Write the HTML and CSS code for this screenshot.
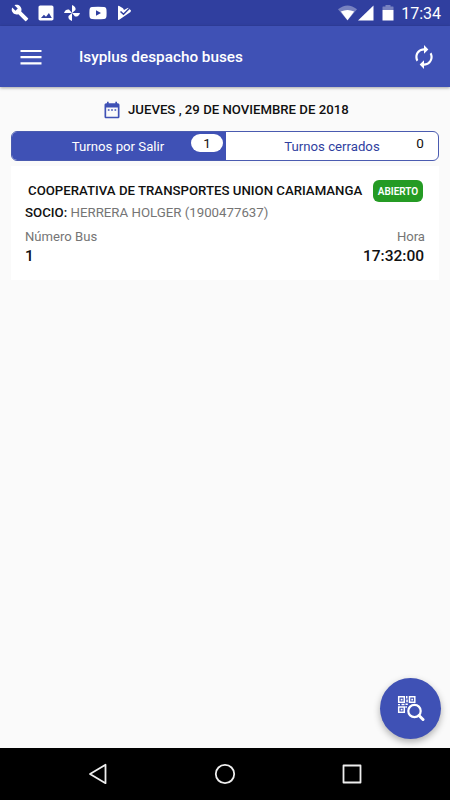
FILE: index.html
```
<!DOCTYPE html>
<html lang="es">

<head>
    <meta charset="UTF-8">
    <title>Isyplus despacho buses</title>
    <link rel="stylesheet" href="styles.css">
</head>

<body>

    <div class="status-bar">
        <div class="status-left">
            <svg width="18" height="18" viewBox="0 0 24 24"><path d="M22.7 19l-9.1-9.1c.9-2.3.4-5-1.5-6.9-2-2-5-2.4-7.4-1.3L9 6 6 9 1.6 4.7C.4 7.1.9 10.1 2.9 12.1c1.9 1.9 4.6 2.4 6.9 1.5l9.1 9.1c.4.4 1 .4 1.4 0l2.3-2.3c.5-.4.5-1.1.1-1.4z"/></svg>
            <svg width="20" height="20" viewBox="0 0 24 24"><path d="M21 19V5c0-1.100-.9-2-2-2H5c-1.100 0-2 .9-2 2v14c0 1.100.9 2 2 2h14c1.100 0 2-.9 2-2zM6 18l3.500-4 2.500 2.500 3.500-4.500 3.500 6z"/></svg>
            <svg width="16" height="16" viewBox="0 0 16 16"><path d="M8 8V0c3 1 4 3 3.500 5zM8 8h8c-1 3-3 4-5 3.500zM8 8v8c-3-1-4-3-3.500-5zM8 8H0c1-3 3-4 5-3.500z"/></svg>
            <svg width="18" height="14" viewBox="0 0 18 14"><path d="M3 1Q9 .4 15 1 17.300 1 17.500 4 17.700 7 17.500 10 17.300 13 15 13 9 13.600 3 13 .7 13 .5 10 .3 7 .5 4 .7 1 3 1zM7 4.300v5.400L12 7z" fill-rule="evenodd"/></svg>
            <svg width="15" height="16" viewBox="0 0 15 16"><path d="M1 1.500Q1 .3 2.200 1L6 3.200 7 5 11.200 2.700 14 5.500 13.500 7 2.200 14.800Q1 15.500 1 14.300z"/><path class="check" d="M3.500 6.500L6.500 9.300 12.500 3.300"/></svg>
        </div>
        <div class="status-right">
            <svg width="19" height="16" viewBox="0 0 20 16"><path class="dim" d="M0 4Q10-4 20 4L10 16z"/><path d="M3 6.500Q10 3 17 6.500L10 15.500z"/></svg>
            <svg width="16" height="16" viewBox="0 0 16 16"><path d="M15.500.5v15H0z"/></svg>
            <svg class="battery" width="12" height="16" viewBox="0 0 12 16"><path class="dim" d="M3.500 0h5v1.500H11Q11.500 1.500 11.500 2v3H.5V2Q.5 1.500 1 1.500h2.500z"/><path d="M.5 5h11v10.500H.5z"/></svg>
            <span class="clock">17:34</span>
        </div>
    </div>

    <header class="app-bar">
        <svg class="menu" width="22" height="16" viewBox="0 0 22 16"><path d="M.5 2h21M.5 8.200h21M.5 14.400h21"/></svg>
        <h1>Isyplus despacho buses</h1>
        <svg class="refresh" width="26" height="26" viewBox="0 0 24 24"><path d="M12 6v3l4-4-4-4v3c-4.420 0-8 3.580-8 8 0 1.570.46 3.030 1.240 4.260L6.700 14.800c-.45-.83-.7-1.790-.7-2.800 0-3.310 2.690-6 6-6zm6.760 1.740L17.300 9.200c.44.84.7 1.790.7 2.800 0 3.310-2.690 6-6 6v-3l-4 4 4 4v-3c4.420 0 8-3.580 8-8 0-1.570-.46-3.030-1.240-4.260z"/></svg>
    </header>

    <main class="content">
        <div class="date-row">
            <svg width="20" height="20" viewBox="0 0 24 24"><path d="M9 11H7v2h2v-2zm4 0h-2v2h2v-2zm4 0h-2v2h2v-2zm2-7h-1V2h-2v2H8V2H6v2H5c-1.110 0-1.990.9-1.990 2L3 20c0 1.100.89 2 2 2h14c1.100 0 2-.9 2-2V6c0-1.100-.9-2-2-2zm0 16H5V9h14v11z"/></svg>
            <span class="date">JUEVES , 29 DE NOVIEMBRE DE 2018</span>
        </div>

        <div class="tabs">
            <div class="tab active"><span class="tab-label">Turnos por Salir</span><span class="badge">1</span></div>
            <div class="tab"><span class="tab-label">Turnos cerrados</span><span class="badge">0</span></div>
        </div>

        <div class="card">
            <div class="card-head">
                <span class="company">COOPERATIVA DE TRANSPORTES UNION CARIAMANGA</span>
                <span class="state">ABIERTO</span>
            </div>
            <div class="partner"><b>SOCIO:</b> <span>HERRERA HOLGER (1900477637)</span></div>
            <div class="row labels"><span>Número Bus</span><span>Hora</span></div>
            <div class="row values"><span>1</span><span class="time">17:32:00</span></div>
        </div>
    </main>

    <button class="fab" aria-label="Buscar código">
        <svg width="28" height="28" viewBox="0 0 28 28">
            <path class="qr" d="M1.700 1.700h5.600v5.600H1.700zM12.500 1.700h5.300v5.600h-5.300zM1.700 12h5.600v5.300H1.700z"/>
            <path class="dots" d="M3.700 3.700h1.800v1.800H3.700zM14.300 3.700h1.800v1.800h-1.800zM3.700 13.800h1.800v1.800H3.700zM9 1h1.500v2.500H9zM9.300 4.500h1.500v2.800H9.300zM1 9h2v1.300H1zM4.500 8.800h3v1.400h-3zM8.500 8.500h2.300v1.400H8.500zM8.500 11h1.200v2H8.500z"/>
            <circle class="lens" cx="17.500" cy="16" r="6.200"/>
            <path class="handle" d="M22 20.500l4 4"/>
        </svg>
    </button>

    <nav class="nav-bar">
        <svg width="20" height="22" viewBox="0 0 20 22"><path d="M17.500 1.800v18.400L2 11z"/></svg>
        <svg width="22" height="22" viewBox="0 0 22 22"><circle cx="11" cy="11" r="9.200"/></svg>
        <svg width="20" height="20" viewBox="0 0 20 20"><path d="M1.500 1.500h17v17h-17z"/></svg>
    </nav>

</body>

</html>
```

FILE: styles.css
```
* {
    box-sizing: border-box;
}

body {
    font-family: Roboto, sans-serif;
    background: #fafafa;
    margin: 0;
    height: 800px;
    display: flex;
    flex-direction: column;
    overflow: hidden;
}

svg {
    display: block;
    flex-shrink: 0;
    fill: #fff;
}

.status-bar {
    height: 26px;
    background: #303f9f;
    color: #fff;
    display: flex;
    justify-content: space-between;
    align-items: center;
    padding: 0 9px 0 11px;
}

.status-left,
.status-right {
    display: flex;
    align-items: center;
}

.status-left {
    gap: 10px;
}

.status-left svg:nth-child(2) {
    margin: 0 -2px 0 -3px;
}

.status-left svg:nth-child(4) {
    margin: 0 0 0 -1px;
}

.status-right svg + svg {
    margin-left: 1px;
}

.status-right svg.battery {
    margin: 0 7px 0 8px;
}

.dim {
    opacity: 0.35;
}

.check {
    fill: none;
    stroke: #303f9f;
    stroke-width: 1.5;
}

.clock {
    font-size: 16px;
    line-height: 27px;
}

.app-bar {
    height: 61px;
    background: #3f51b5;
    color: #fff;
    display: flex;
    align-items: center;
    padding: 0 13px 0 20px;
    box-shadow: 0 1px 3px rgba(0, 0, 0, 0.35);
    z-index: 1;
}

.menu path {
    stroke: #fff;
    stroke-width: 2.2;
}

.app-bar h1 {
    flex: 1;
    margin: 1px 0 0 37px;
    font-size: 15.3px;
    font-weight: 500;
}

.content {
    flex: 1;
    padding: 12px 11px 0;
}

.date-row {
    display: flex;
    align-items: center;
    height: 22px;
    margin-bottom: 10px;
    padding-left: 91px;
    gap: 6px;
}

.date-row svg {
    fill: #3f51b5;
}

.date {
    font-size: 13.2px;
    font-weight: 500;
    line-height: 20px;
    margin-bottom: 1px;
    color: #111;
    white-space: nowrap;
}

.tabs {
    display: flex;
    height: 30px;
    border: 1px solid #4a5bb0;
    border-radius: 6px;
    background: #fff;
    overflow: hidden;
}

.tab {
    flex: 1;
    position: relative;
    display: flex;
    align-items: center;
    justify-content: center;
    font-size: 13.2px;
    color: #303f9f;
}

.tab.active {
    flex: 0 0 214px;
    padding-right: 2px;
    background: #3f51b5;
    color: #fff;
}

.badge {
    position: absolute;
    top: 2px;
    right: 2px;
    width: 32px;
    height: 18px;
    border-radius: 9px;
    background: #fff;
    color: #111;
    font-size: 13.5px;
    line-height: 18px;
    text-align: center;
}

.active .badge {
    right: 3px;
}

.card {
    background: #fff;
    height: 114px;
    margin: 5px 0 0;
    padding: 14px 14px 0;
}

.card-head {
    display: flex;
    justify-content: space-between;
    align-items: center;
    height: 22px;
    padding: 0 2px 0 3px;
}

.company {
    font-size: 13.22px;
    font-weight: 500;
    line-height: 20px;
    color: #111;
    white-space: nowrap;
}

.state {
    width: 50px;
    height: 22px;
    border-radius: 6px;
    background: #259b24;
    color: #fff;
    font-size: 10px;
    font-weight: 600;
    line-height: 23px;
    text-align: center;
}

.partner {
    font-size: 13.25px;
    line-height: 22px;
    color: #757575;
}

.partner b {
    font-weight: 500;
    color: #111;
}

.row {
    display: flex;
    justify-content: space-between;
}

.labels {
    font-size: 13.1px;
    line-height: 22px;
    color: #757575;
    margin-top: 2px;
}

.values {
    font-size: 15.5px;
    font-weight: 500;
    line-height: 16px;
    color: #111;
    padding-right: 1px;
}

.fab {
    position: absolute;
    right: 9px;
    bottom: 61px;
    width: 61px;
    height: 61px;
    padding: 0;
    border: none;
    border-radius: 50%;
    background: #3f51b5;
    box-shadow: 0 3px 7px rgba(0, 0, 0, 0.3);
    display: flex;
    align-items: center;
    justify-content: center;
}

.qr {
    fill: none;
    stroke: #fff;
    stroke-width: 1.5;
}

.lens {
    fill: #3f51b5;
    stroke: #fff;
    stroke-width: 2.2;
}

.handle {
    stroke: #fff;
    stroke-width: 3;
    stroke-linecap: round;
}

.nav-bar {
    height: 52px;
    background: #000;
    display: flex;
    align-items: center;
    justify-content: space-between;
    padding: 0 88px;
}

.nav-bar svg {
    fill: none;
    stroke: #eee;
    stroke-width: 1.8;
    stroke-linejoin: round;
}
```
